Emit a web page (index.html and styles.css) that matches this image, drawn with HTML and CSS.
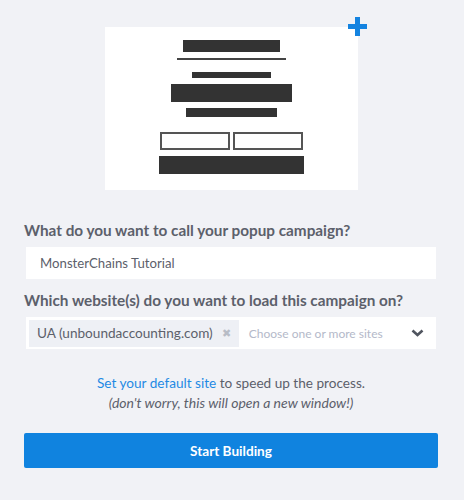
FILE: index.html
```html
<!DOCTYPE html>
<html lang="en">
<head>
  <meta charset="UTF-8" />
  <title>New Campaign</title>
  <link rel="stylesheet" href="styles.css">
</head>
<body>

  <div class="wrap">
    <!-- TEMPLATE PREVIEW -->
    <div class="preview">
      <div class="thumb">
        <div class="bar bar-title"></div>
        <div class="bar bar-rule"></div>
        <div class="bar bar-sub"></div>
        <div class="bar bar-big"></div>
        <div class="bar bar-small"></div>
        <div class="fields">
          <div class="field"></div>
          <div class="field"></div>
        </div>
        <div class="bar bar-btn"></div>
      </div>
      <svg class="plus" width="19" height="19" viewBox="0 0 19 19">
        <rect x="7" y="0" width="5" height="19" fill="#1483e0"/>
        <rect x="0" y="7" width="19" height="5" fill="#1483e0"/>
      </svg>
    </div>

    <!-- FORM -->
    <form class="form">
      <label class="label" for="name">What do you want to call your popup campaign?</label>
      <input class="input" type="text" id="name" value="MonsterChains Tutorial">

      <label class="label">Which website(s) do you want to load this campaign on?</label>
      <div class="select">
        <span class="tag">UA (unboundaccounting.com) <span class="tag-x">&#10006;</span></span>
        <span class="placeholder">Choose one or more sites</span>
        <svg class="chevron" width="13" height="8" viewBox="0 0 13 8">
          <path d="M1.5 1.5 L6.5 6 L11.5 1.5" fill="none" stroke="#50555f" stroke-width="2.6"/>
        </svg>
      </div>

      <p class="help">
        <a href="#">Set your default site</a> to speed up the process.<br>
        <em>(don't worry, this will open a new window!)</em>
      </p>

      <button class="start" type="button">Start Building</button>
    </form>
  </div>

</body>
</html>
```

FILE: styles.css
```css
* {
  box-sizing: border-box;
}

body {
  margin: 0;
  background-color: #f1f2f6;
  font-family: 'Lato', sans-serif;
  color: #5c606b;
}

.wrap {
  padding: 27px 26px 0 24px;
}

.preview {
  position: relative;
  width: 253px;
  margin: 0 auto;
}

.thumb {
  background-color: #ffffff;
  height: 163px;
  padding-top: 13px;
  display: flex;
  flex-direction: column;
  align-items: center;
}

.bar {
  background-color: #333333;
}

.bar-title {
  width: 97px;
  height: 12px;
}

.bar-rule {
  width: 109px;
  height: 2px;
  margin-top: 6px;
  background-color: #444444;
}

.bar-sub {
  width: 79px;
  height: 6px;
  margin-top: 12px;
}

.bar-big {
  width: 121px;
  height: 18px;
  margin-top: 6px;
}

.bar-small {
  width: 91px;
  height: 9px;
  margin-top: 6px;
}

.fields {
  display: flex;
  gap: 3px;
  margin-top: 15px;
}

.field {
  width: 70px;
  height: 18px;
  border: 2px solid #555555;
  background-color: #ffffff;
}

.bar-btn {
  width: 145px;
  height: 18px;
  margin-top: 6px;
}

.plus {
  position: absolute;
  top: -10px;
  right: -9px;
}

.form {
  margin-top: 30px;
}

.label {
  display: block;
  font-size: 15.3px;
  font-weight: 700;
  line-height: 20px;
  color: #5c606b;
  margin-bottom: 7px;
}

.input {
  display: block;
  width: 410px;
  height: 32px;
  margin: 0 0 11px 2px;
  border: none;
  background-color: #ffffff;
  padding: 0 14px;
  font-family: 'Lato', sans-serif;
  font-size: 13.2px;
  color: #5c606b;
  outline: none;
}

.select {
  display: flex;
  align-items: center;
  width: 410px;
  height: 32px;
  margin-left: 2px;
  background-color: #ffffff;
  padding: 2px 12px 2px 3px;
}

.tag {
  display: flex;
  align-items: center;
  height: 27px;
  padding: 0 8px;
  background-color: #eef0f5;
  font-size: 13.6px;
  color: #5c606b;
  white-space: nowrap;
}

.tag-x {
  margin-left: 9px;
  font-size: 11px;
  color: #b8bcc6;
}

.placeholder {
  flex: 1;
  margin-left: 10px;
  font-size: 12px;
  color: #b4b9c9;
  white-space: nowrap;
}

.help {
  margin: 24px 0 0;
  text-align: center;
  font-size: 13.6px;
  line-height: 20px;
  color: #5c606b;
}

.help em {
  font-size: 14px;
}

.help a {
  color: #1f8ae4;
  text-decoration: none;
}

.start {
  display: block;
  width: 414px;
  height: 35px;
  margin-top: 20px;
  border: none;
  border-radius: 2px;
  background-color: #1083df;
  color: #ffffff;
  font-family: 'Lato', sans-serif;
  font-size: 13.6px;
  font-weight: 700;
  cursor: pointer;
}
```
